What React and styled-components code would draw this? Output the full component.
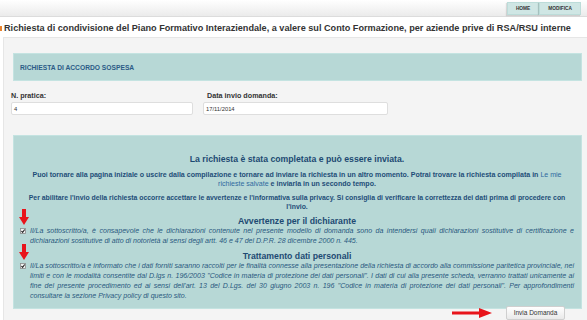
import styled, { createGlobalStyle } from "styled-components";

const GlobalStyle = createGlobalStyle`
    html, body {
        margin: 0;
        padding: 0;
        background: #fff;
        overflow: hidden;
    }
    body {
        font-family: "Liberation Sans", Arial, sans-serif;
        color: #333;
    }
`;

const DownArrow = () => (
    <svg width="10" height="16" viewBox="0 0 10 16">
        <polygon points="3,0 7,0 7,8 10,8 5,16 0,8 3,8" fill="#e8141b" />
    </svg>
);

const RightArrow = () => (
    <svg width="40" height="10" viewBox="0 0 40 10">
        <polygon points="0,3.5 27,3.5 27,0 40,5 27,10 27,6.5 0,6.5" fill="#e8141b" />
    </svg>
);

const Tick = () => (
    <svg width="6" height="6" viewBox="0 0 6 6">
        <rect x="0.5" y="0.5" width="5" height="5" fill="#f2f2f2" stroke="#8a8a8a" strokeWidth="0.8" />
        <polyline points="1.4,3 2.6,4.3 4.7,1.5" fill="none" stroke="#222" strokeWidth="1.1" />
    </svg>
);

const App = () => {
    return <>
        <GlobalStyle />
        <TopBar>
            <NavButton>HOME</NavButton>
            <NavButton>MODIFICA</NavButton>
        </TopBar>
        <TitleRow>
            <Marker />
            <Title>Richiesta di condivisione del Piano Formativo Interaziendale, a valere sul Conto Formazione, per aziende prive di RSA/RSU interne</Title>
        </TitleRow>
        <Panel>
            <StatusHeader>RICHIESTA DI ACCORDO SOSPESA</StatusHeader>
            <FieldsRow>
                <Field $width={182}>
                    <Label>N. pratica:</Label>
                    <Input>4</Input>
                </Field>
                <Field $width={185}>
                    <Label $indent={4}>Data invio domanda:</Label>
                    <Input>17/11/2014</Input>
                </Field>
            </FieldsRow>
            <InfoBox>
                <BoxHeading>La richiesta è stata completata e può essere inviata.</BoxHeading>
                <Notice $gap={5.5} $size={7.05}>
                    Puoi tornare alla pagina iniziale o uscire dalla compilazione e tornare ad inviare la richiesta in un altro momento. Potrai trovare la richiesta compilata in <NoticeLink>Le mie richieste salvate</NoticeLink> e inviarla in un secondo tempo.
                </Notice>
                <Notice $gap={5} $size={6.88}>
                    Per abilitare l'invio della richiesta occorre accettare le avvertenze e l'informativa sulla privacy. Si consiglia di verificare la correttezza dei dati prima di procedere con l'invio.
                </Notice>
                <BoxHeading $gap={5}>Avvertenze per il dichiarante</BoxHeading>
                <CheckRow>
                    <ArrowMark><DownArrow /></ArrowMark>
                    <CheckBox><Tick /></CheckBox>
                    <Statement>
                        Il/La sottoscritto/a, è consapevole che le dichiarazioni contenute nel presente modello di domanda sono da intendersi quali dichiarazioni sostitutive di certificazione e dichiarazioni sostitutive di atto di notorietà ai sensi degli artt. 46 e 47 del D.P.R. 28 dicembre 2000 n. 445.
                    </Statement>
                </CheckRow>
                <BoxHeading $gap={5}>Trattamento dati personali</BoxHeading>
                <CheckRow>
                    <ArrowMark><DownArrow /></ArrowMark>
                    <CheckBox><Tick /></CheckBox>
                    <Statement>
                        Il/La sottoscritto/a è informato che i dati forniti saranno raccolti per le finalità connesse alla presentazione della richiesta di accordo alla commissione paritetica provinciale, nei limiti e con le modalità consentite dal D.lgs n. 196/2003 "Codice in materia di protezione dei dati personali". I dati di cui alla presente scheda, verranno trattati unicamente ai fine del presente procedimento ed ai sensi dell'art. 13 del D.Lgs. del 30 giugno 2003 n. 196 "Codice in materia di protezione dei dati personali". Per approfondimenti consultare la sezione Privacy policy di questo sito.
                    </Statement>
                </CheckRow>
            </InfoBox>
            <Footer>
                <RightArrow />
                <SendButton>Invia Domanda</SendButton>
            </Footer>
            <NextBox />
        </Panel>
    </>;
}

export default App;

const TopBar = styled.div`
    height: 17px;
    box-sizing: border-box;
    background: linear-gradient(to bottom, #ffffff, #ebebeb);
    border-bottom: 1px solid #dcdcdc;
    display: flex;
    justify-content: flex-end;
    align-items: flex-start;
    padding: 2px 6px 0 0;
`

const NavButton = styled.div`
    height: 13px;
    box-sizing: border-box;
    padding: 0 8px;
    display: flex;
    align-items: center;
    background: #cfe6e4;
    border: 1px solid #bcdcd9;
    box-shadow: -1px 1px 1px rgba(0, 0, 0, 0.12);
    font-size: 4.8px;
    font-weight: bold;
    color: #333;
`

const TitleRow = styled.div`
    display: flex;
    align-items: center;
    gap: 2px;
    margin-top: 5px;
    height: 12px;
`

const Marker = styled.span`
    width: 2px;
    height: 5px;
    background: #e8822e;
`

const Title = styled.h1`
    margin: 0;
    font-size: 9.15px;
    font-weight: bold;
    color: #333;
    white-space: nowrap;
`

const Panel = styled.div`
    margin: 3px 0 0 3px;
    background: #f4f4f4;
    border: 1px solid #e6e6e6;
    border-right: none;
    padding: 15px 5px 0 7px;
`

const StatusHeader = styled.div`
    margin-left: 2px;
    height: 28px;
    box-sizing: border-box;
    background: #b7d8d6;
    border: 1px solid #c4e3e1;
    padding-left: 6px;
    display: flex;
    align-items: center;
    font-size: 6.7px;
    font-weight: bold;
    color: #2b5b86;
`

const FieldsRow = styled.div`
    display: flex;
    gap: 10px;
    margin-top: 10px;
`

const Field = styled.div`
    width: ${p => p.$width}px;
    display: flex;
    flex-direction: column;
    gap: 2px;
`

const Label = styled.label`
    padding-left: ${p => p.$indent || 0}px;
    font-size: 7.2px;
    font-weight: bold;
    color: #333;
    line-height: 9px;
`

const Input = styled.div`
    height: 13px;
    box-sizing: border-box;
    background: #fff;
    border: 1px solid #dedede;
    border-radius: 2px;
    padding-left: 2px;
    display: flex;
    align-items: center;
    font-size: 5.8px;
    color: #333;
`

const InfoBox = styled.div`
    margin: 20px 0 0 2px;
    background: #b7d8d6;
    border: 1px solid #c4e3e1;
    padding: 18px 7px 7px 6px;
    color: #1e4d78;
`

const BoxHeading = styled.h2`
    margin: ${p => p.$gap || 0}px 0 0;
    text-align: center;
    font-size: 8.7px;
    line-height: 10px;
    font-weight: bold;
    color: #1d4a72;
`

const Notice = styled.p`
    margin: ${p => p.$gap}px 0 0;
    text-align: center;
    font-size: ${p => p.$size}px;
    line-height: 9px;
    font-weight: bold;
    color: #1e4d78;
`

const NoticeLink = styled.span`
    font-weight: normal;
    color: #2f6aa0;
`

const CheckRow = styled.div`
    position: relative;
    display: flex;
    align-items: flex-start;
    gap: 4px;
`

const ArrowMark = styled.span`
    position: absolute;
    left: -1px;
    top: -17px;
    line-height: 0;
`

const CheckBox = styled.span`
    flex: none;
    margin-top: 2px;
    line-height: 0;
`

const Statement = styled.p`
    margin: 0;
    flex: 1;
    font-size: 7.05px;
    line-height: 10px;
    font-style: italic;
    text-align: justify;
    color: #2a5880;
`

const Footer = styled.div`
    display: flex;
    justify-content: flex-end;
    align-items: center;
    gap: 14px;
    padding-right: 17px;
    margin-top: -3px;
    height: 14px;
`

const SendButton = styled.button`
    width: 59px;
    height: 14px;
    padding: 0;
    background: linear-gradient(to bottom, #ffffff, #e9e9e9);
    border: 1px solid #cfcfcf;
    border-radius: 2px;
    font-family: "Liberation Sans", Arial, sans-serif;
    font-size: 6.5px;
    color: #333;
`

const NextBox = styled.div`
    margin: 1px 0 0 2px;
    height: 20px;
    background: #b7d8d6;
    border: 1px solid #c4e3e1;
`
